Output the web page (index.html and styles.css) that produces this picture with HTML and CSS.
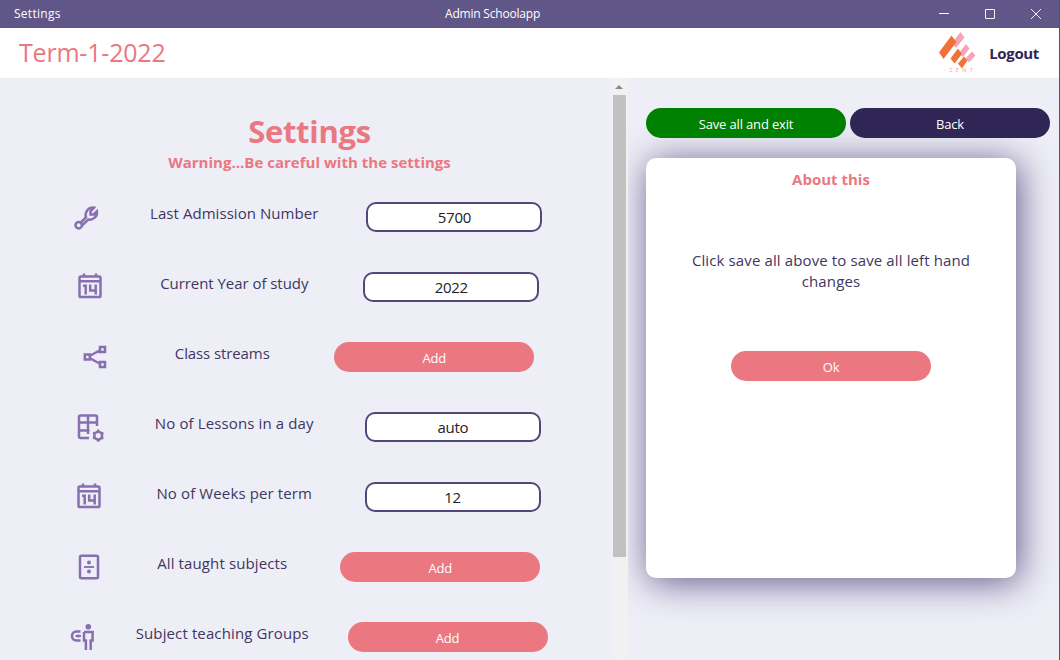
FILE: index.html
```html
<!DOCTYPE html>
<html lang="en">
<head>
<meta charset="utf-8">
<title>Admin Schoolapp</title>
<link rel="stylesheet" href="styles.css">
</head>
<body>
<div class="app">
  <header class="titlebar">
    <span class="menu">Settings</span>
    <span class="apptitle">Admin Schoolapp</span>
    <svg class="controls" width="104" height="12" viewBox="0 0 104 12"><path d="M0 5.500h10M46.500 1.500h9v9h-9zM92 1l10 10M102 1L92 11"/></svg>
  </header>
  <div class="topbar">
    <span class="term">Term-1-2022</span>
    <div class="account">
      <svg class="logo" width="40" height="44" viewBox="0 0 40 44">
        <g class="pink"><path d="M21.500 1L25.500 6.500 17 17 13 12z"/><path d="M27 13l3.500 4.500-6.500 8.500-4-4z"/><path d="M33 20.500l3.500 4-6.500 7-3.500-4z"/></g>
        <g class="orange"><path d="M12.500 4.500l5 6.500L4.500 28 0 21.500z"/><path d="M19 17.500l4 5.500-7.500 9.500-4-5z"/><path d="M25 25.500l3.500 4-5.500 8-4-5z"/></g>
        <text x="5" y="41">- Z E N T</text>
      </svg>
      <span class="logout">Logout</span>
    </div>
  </div>
  <div class="body">
    <main class="settings">
      <h1><span>Settings</span></h1>
      <p class="warning">Warning...Be careful with the settings</p>
      <div class="rows">
        <div class="row">
          <svg class="icon" viewBox="0 0 30 30"><path d="M8.300 21L14 15.500c-1.700-5.500 2.500-10.500 8-9.800L18.500 9.500v3h3.200l3.200-3.200c1 5-4 9.300-8.700 8.200L10.200 23.300"/><circle cx="6.700" cy="23.200" r="3.200"/></svg>
          <span class="label w168">Last Admission Number</span><div class="input">5700</div>
        </div>
        <div class="row">
          <svg class="icon" viewBox="0 0 30 30"><path d="M5.800 4.500h18.400q1.300 0 1.300 1.300v18q0 1.300-1.300 1.300H5.800q-1.300 0-1.300-1.300v-18q0-1.300 1.300-1.300zM4.500 9.300h21M9 1.500V5M21 1.500V5M8 13.800h2.700v8.700M15.200 12.500V18.500h6.500M20.700 12.500V22.500"/></svg>
          <span class="label w149">Current Year of study</span><div class="input">2022</div>
        </div>
        <div class="row">
          <svg class="icon" viewBox="0 0 30 30"><path d="M4.800 12.500h5v5h-5zM20 5h5v5h-5zM20 20h5v5h-5zM10.500 13.500l9-5M10.500 16.500l9 5"/></svg>
          <span class="label w95">Class streams</span><div class="button">Add</div>
        </div>
        <div class="row">
          <svg class="icon" viewBox="0 0 30 30"><path d="M23 14V5Q23 3.500 21.500 3.500H6.500Q5 3.500 5 5V24.500q0 1.500 1.500 1.500h8.500M14 3.500V22M5 10.500h18M5 18.500h10.500"/><circle cx="24.200" cy="23.600" r="3.900"/><path class="teeth" d="M24.200 17.500v2.500M24.200 27.200v2.500M19 20.600l2 1.200M29.400 20.600l-2 1.200M19 26.600l2-1.200M29.400 26.600l-2-1.200"/></svg>
          <span class="label w159">No of Lessons in a day</span><div class="input">auto</div>
        </div>
        <div class="row">
          <svg class="icon" viewBox="0 0 30 30"><path d="M5.800 4.500h18.400q1.300 0 1.300 1.300v18q0 1.300-1.300 1.300H5.800q-1.300 0-1.300-1.300v-18q0-1.300 1.300-1.300zM4.500 9.300h21M9 1.500V5M21 1.500V5M8 13.800h2.700v8.700M15.200 12.500V18.500h6.500M20.700 12.500V22.500"/></svg>
          <span class="label w156">No of Weeks per term</span><div class="input">12</div>
        </div>
        <div class="row">
          <svg class="icon" viewBox="0 0 30 30"><rect x="6" y="3.700" width="18" height="22.500" rx="1.500"/><path class="thin" d="M10 15h10"/><circle class="solid" cx="15" cy="10.500" r="2"/><circle class="solid" cx="15" cy="19.500" r="2"/></svg>
          <span class="label w131">All taught subjects</span><div class="button">Add</div>
        </div>
        <div class="row">
          <svg class="icon" viewBox="0 0 30 30"><circle class="solid" cx="21.300" cy="4.700" r="2.800"/><path d="M17 9.900h8.600v8.600h-1.900V28M17 9.900v8.600h1.900V28M13.500 9.500H9.500C3.500 9.500 3.500 18.500 9.500 18.500h4"/><path class="thin" d="M8.500 14h5.500M11.200 12.500v3"/></svg>
          <span class="label w174">Subject teaching Groups</span><div class="button">Add</div>
        </div>
      </div>
    </main>
    <div class="scrollbar"><span class="arrow"></span><span class="thumb"></span></div>
    <aside class="side">
      <div class="actions"><div class="button save">Save all and exit</div><div class="button back">Back</div></div>
      <section class="card">
        <h2>About this</h2>
        <p>Click save all above to save all left hand<br>changes</p>
        <div class="button">Ok</div>
      </section>
    </aside>
  </div>
</div>
</body>
</html>
```
FILE: styles.css
```css
* { box-sizing: border-box; }
body { margin: 0; font-family: "Open Sans", "Noto Sans", sans-serif; color: #302655; }
.app { width: 1060px; height: 660px; overflow: hidden; background: #eeeef7; border-right: 1px solid #55535f; display: flex; flex-direction: column; }
.titlebar { height: 28px; flex: none; background: #605688; color: #fff; display: grid; grid-template-columns: 445px 1fr 104px; align-items: center; padding-right: 16px; font-size: 12px; line-height: 28px; white-space: nowrap; }
.menu { padding-left: 14px; letter-spacing: 0.27px; }
.apptitle { letter-spacing: -0.2px; }
.controls { fill: none; stroke: #f4f2f8; stroke-width: 1; }
.topbar { height: 50px; flex: none; background: #fff; display: flex; justify-content: space-between; padding: 0 20px 0 19px; }
.term { color: #eb7780; font-size: 25px; line-height: 48px; letter-spacing: -0.2px; }
.account { display: flex; align-items: center; gap: 10px; }
.logo .pink { fill: #f5a5b5; }
.logo .orange { fill: #ef7338; }
.logo text { font-size: 5.5px; fill: #f0aa98; letter-spacing: 1px; }
.logout { font-size: 15px; font-weight: 700; line-height: 50px; letter-spacing: -0.35px; }
.body { flex: 1; min-height: 0; display: flex; }
.settings { width: 611px; flex: none; padding: 33px 0 0 48px; }
h1, h2, p { margin: 0; }
h1, .warning { width: 523px; text-align: center; color: #eb7780; font-weight: 700; white-space: nowrap; }
h1 { font-size: 31px; line-height: 40px; letter-spacing: -0.3px; }
.warning { padding-top: 1px; font-size: 15px; line-height: 21px; letter-spacing: 0.02px; }
.rows { width: 518.5px; margin-top: 29px; display: flex; flex-direction: column; gap: 40px; }
.row { height: 30px; display: flex; justify-content: space-around; align-items: flex-start; }
.icon { width: 30px; height: 30px; flex: none; fill: none; stroke: #8870b0; stroke-width: 2.5; overflow: visible; }
.icon .solid { fill: #8870b0; stroke: none; }
.icon .thin { stroke-width: 1.9; }
.icon .teeth { stroke-width: 2.2; }
.label { color: #40375f; font-size: 15px; line-height: 23px; text-align: center; white-space: nowrap; display: flex; justify-content: center; letter-spacing: 0.05px; }
.w168 { width: 168px; }
.w149 { width: 149px; letter-spacing: -0.05px; }
.w95 { width: 95px; letter-spacing: -0.1px; }
.w159 { width: 159px; letter-spacing: 0.12px; }
.w156 { width: 156.5px; letter-spacing: 0.12px; }
.w131 { width: 131.5px; letter-spacing: 0.12px; }
.w174 { width: 174.5px; letter-spacing: 0.12px; }
.input { width: 176px; height: 30px; background: #fff; border: 2px solid #51477b; border-radius: 10px; color: #222; font-size: 15px; line-height: 27px; text-align: center; letter-spacing: -0.3px; }
.button { width: 200px; height: 30px; border-radius: 15px; background: #eb7780; color: #fff; font-size: 13px; font-weight: 500; line-height: 32px; text-align: center; letter-spacing: -0.15px; }
.scrollbar { width: 17px; flex: none; background: #f1f1f1; display: flex; flex-direction: column; align-items: center; padding-right: 1px; }
.arrow { margin: 7px 0 6px; border: 4px solid transparent; border-top: 0; border-bottom: 4px solid #8a8a8a; }
.thumb { width: 13px; height: 462px; background: #c1c1c1; }
.side { flex: 1; overflow: hidden; padding: 30px 0 0 18px; }
.actions { display: flex; gap: 4px; }
.actions .button { flex: none; position: relative; z-index: 1; }
.save { background: #008000; }
.back { background: #302655; }
.card { width: 370px; height: 420px; margin-top: 20px; border-radius: 10px; background: #fff; box-shadow: 3px 4px 36px rgba(81, 71, 123, 0.9); display: flex; flex-direction: column; align-items: center; }
.card h2 { margin-top: 9px; font-size: 15px; line-height: 24px; color: #eb7780; }
.card p { margin: 59px 0; color: #40375f; font-size: 15px; line-height: 21px; text-align: center; white-space: nowrap; letter-spacing: 0.12px; }
```
